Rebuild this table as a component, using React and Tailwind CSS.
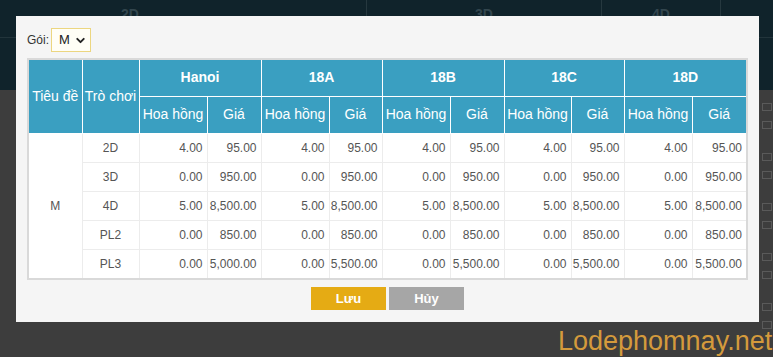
import React from 'react';
import { ChevronDown } from 'lucide-react';

const stations = ['Hanoi', '18A', '18B', '18C', '18D'];

const rows = [
    { game: '2D', values: [['4.00', '95.00'], ['4.00', '95.00'], ['4.00', '95.00'], ['4.00', '95.00'], ['4.00', '95.00']] },
    { game: '3D', values: [['0.00', '950.00'], ['0.00', '950.00'], ['0.00', '950.00'], ['0.00', '950.00'], ['0.00', '950.00']] },
    { game: '4D', values: [['5.00', '8,500.00'], ['5.00', '8,500.00'], ['5.00', '8,500.00'], ['5.00', '8,500.00'], ['5.00', '8,500.00']] },
    { game: 'PL2', values: [['0.00', '850.00'], ['0.00', '850.00'], ['0.00', '850.00'], ['0.00', '850.00'], ['0.00', '850.00']] },
    { game: 'PL3', values: [['0.00', '5,000.00'], ['0.00', '5,500.00'], ['0.00', '5,500.00'], ['0.00', '5,500.00'], ['0.00', '5,500.00']] },
];

const colWidths = [53, 57, 68, 54, 68, 53, 68, 54, 67, 53, 68, 54];

const Background = () => {
    return (
        <div className="h-[357px] w-[773px] bg-[#3d3d3d] flex flex-col">
            <div className="h-[90px] bg-[#10232b] flex flex-col">
                <div className="h-[38px] flex text-[14px] font-bold text-[#33464e] border-b border-[#22343b]">
                    <div className="w-[260px] pt-[4px] text-center">2D</div>
                    <div className="w-[107px] border-r border-[#26383f]"></div>
                    <div className="w-[235px] pt-[4px] text-center border-r border-[#26383f]">3D</div>
                    <div className="w-[119px] pt-[4px] text-center border-r border-[#26383f]">4D</div>
                    <div className="flex-1"></div>
                </div>
            </div>
            <div className="flex-1 flex justify-end">
                <div className="w-[11px] flex flex-col gap-[24px] pt-[13px]">
                    {[0, 1, 2, 3, 4].map((i) => (
                        <div key={i} className="flex flex-col gap-[10px]">
                            <div className="w-[10px] h-[8px] border border-[#5a5a5a]"></div>
                            <div className="w-[10px] h-[8px] border border-[#5a5a5a]"></div>
                        </div>
                    ))}
                </div>
            </div>
        </div>
    );
};

const App = () => {
    return (
        <div className="relative w-[773px] h-[357px] overflow-hidden font-['Liberation_Sans',Arial,sans-serif]">
            <Background />

            <div className="absolute left-[16px] top-[16px] w-[743px] h-[306px] bg-[#f5f5f5] px-[11px] pt-[12px]">
                <div className="flex items-center h-[24px] text-[12px] text-[#333]">
                    <span className="mr-[2px]">Gói:</span>
                    <div className="h-[24px] w-[40px] border border-[#ecd680] bg-[#fffef6] flex items-center pl-[7px] gap-[4px] text-[13px] text-[#222]">
                        <span>M</span>
                        <ChevronDown size={13} strokeWidth={3.5} />
                    </div>
                </div>

                <div className="mt-[6px] border-2 border-[#d9d9d9] bg-white">
                    <table className="w-[717px] border-collapse table-fixed">
                        <colgroup>
                            {colWidths.map((w, i) => (
                                <col key={i} style={{ width: w }} />
                            ))}
                        </colgroup>
                        <thead className="bg-[#3a9fc1] text-white text-[14px]">
                            <tr className="h-[36px]">
                                <th rowSpan={2} className="font-normal border border-white border-t-0 border-l-0 px-0">Tiêu đề</th>
                                <th rowSpan={2} className="font-normal border border-white border-t-0 px-0">Trò chơi</th>
                                {stations.map((s, i) => (
                                    <th key={s} colSpan={2} className={`font-bold border border-white border-t-0 ${i === stations.length - 1 ? 'border-r-0' : ''}`}>{s}</th>
                                ))}
                            </tr>
                            <tr className="h-[37px]">
                                {stations.map((s, i) => (
                                    <React.Fragment key={s}>
                                        <th className="font-normal border border-white px-0">Hoa hồng</th>
                                        <th className={`font-normal border border-white px-0 ${i === stations.length - 1 ? 'border-r-0' : ''}`}>Giá</th>
                                    </React.Fragment>
                                ))}
                            </tr>
                        </thead>
                        <tbody className="text-[12px] text-[#555]">
                            {rows.map((row, ri) => (
                                <tr key={row.game} className="h-[29px]">
                                    {ri === 0 && (
                                        <td rowSpan={5} className="text-center border border-[#ececec] border-l-0 border-b-0">M</td>
                                    )}
                                    <td className={`text-center border border-[#ececec] ${ri === rows.length - 1 ? 'border-b-0' : ''}`}>{row.game}</td>
                                    {row.values.map((v, vi) => (
                                        <React.Fragment key={vi}>
                                            <td className={`text-right pr-[4px] border border-[#ececec] ${ri === rows.length - 1 ? 'border-b-0' : ''}`}>{v[0]}</td>
                                            <td className={`text-right pr-[4px] border border-[#ececec] ${ri === rows.length - 1 ? 'border-b-0' : ''} ${vi === row.values.length - 1 ? 'border-r-0' : ''}`}>{v[1]}</td>
                                        </React.Fragment>
                                    ))}
                                </tr>
                            ))}
                        </tbody>
                    </table>
                </div>

                <div className="mt-[7px] flex justify-center gap-[3px]">
                    <button className="w-[75px] h-[23px] bg-[#e5ab14] text-white text-[13px] font-bold">Lưu</button>
                    <button className="w-[75px] h-[23px] bg-[#a6a6a6] text-white text-[13px] font-bold">Hủy</button>
                </div>
            </div>

            <div className="absolute left-[558px] top-[324px] text-[27px] leading-[34px] text-[#d49a3c] whitespace-nowrap">
                Lodephomnay.net
            </div>
        </div>
    );
};

export default App;
